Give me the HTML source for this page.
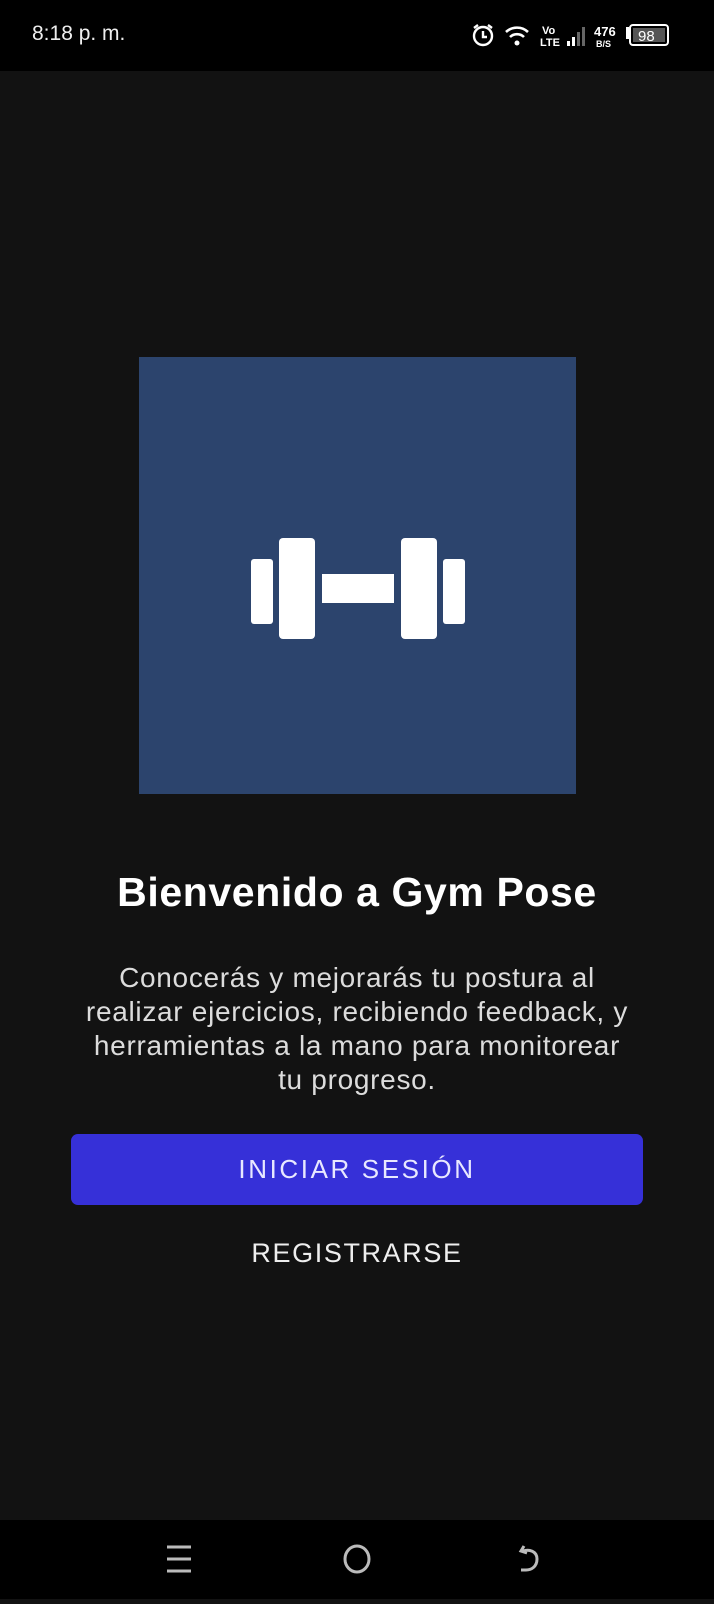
<!DOCTYPE html>
<html><head><meta charset="utf-8"><style>
*{margin:0;padding:0;box-sizing:border-box}
html,body{width:714px;height:1599px;background:#121212;overflow:hidden;font-family:"Liberation Sans",sans-serif;color:#fff}
.sb{position:absolute;left:0;top:0;width:714px;height:71px;background:#000}
.time{position:absolute;left:32px;top:22px;font-size:21px;color:#eee}
.nav{position:absolute;left:0;top:1520px;width:714px;height:79px;background:#000}
.sq{position:absolute;left:139px;top:357px;width:437px;height:437px;background:#2c446d}
.c{position:absolute;left:0;width:714px;text-align:center;white-space:nowrap}
.title{top:869px;font-size:41px;font-weight:bold;letter-spacing:0.6px}
.p{font-size:28px;color:#dcdcdc;letter-spacing:0.7px}
.btn{position:absolute;left:71px;top:1134px;width:572px;height:71px;background:#3630d8;border-radius:7px;text-align:center;line-height:71px;font-size:26px;letter-spacing:2.6px;color:#e8e8ff}
.reg{top:1238px;font-size:27px;letter-spacing:1.6px;color:#eee}
</style></head><body>
<div class="sb">
<div class="time">8:18 p. m.</div>
<svg style="position:absolute;left:470px;top:22px" width="215" height="28" viewBox="0 0 215 28">
<g fill="none" stroke="#fff" stroke-width="2.4"><circle cx="13" cy="14" r="9"/><path d="M13 9v6h4M4 6l4-3M22 6l-4-3"/></g>
<g fill="none" stroke="#fff" stroke-width="2.6"><path d="M36 10a16 16 0 0 1 22 0"/><path d="M40 15a10 10 0 0 1 14 0"/></g>
<circle cx="47" cy="21" r="2.5" fill="#fff"/>
<text x="72" y="12" font-size="11" font-weight="bold" fill="#fff" font-family="Liberation Sans">Vo</text>
<text x="70" y="24" font-size="11" font-weight="bold" fill="#fff" font-family="Liberation Sans">LTE</text>
<rect x="97" y="19" width="3" height="5" fill="#fff"/><rect x="102" y="15" width="3" height="9" fill="#fff"/><rect x="107" y="10" width="3" height="14" fill="#666"/><rect x="112" y="5" width="3" height="19" fill="#666"/>
<text x="124" y="14" font-size="13" font-weight="bold" fill="#fff" font-family="Liberation Sans">476</text>
<text x="126" y="25" font-size="9" font-weight="bold" fill="#fff" font-family="Liberation Sans">B/S</text>
<rect x="156" y="5" width="3" height="12" fill="#fff"/>
<rect x="160" y="3" width="38" height="20" rx="3" fill="none" stroke="#fff" stroke-width="2"/>
<rect x="163" y="6" width="32" height="14" fill="#555"/>
<text x="168" y="19" font-size="15" fill="#fff" font-family="Liberation Sans">98</text>
</svg>
</div>
<div class="sq">
<svg width="437" height="437" viewBox="138 356 437 437">
<g fill="#fff">
<rect x="250" y="558" width="22" height="65" rx="3"/>
<rect x="278" y="537" width="36" height="101" rx="4"/>
<rect x="321" y="573" width="72" height="29"/>
<rect x="400" y="537" width="36" height="101" rx="4"/>
<rect x="442" y="558" width="22" height="65" rx="3"/>
</g></svg>
</div>
<div class="c title">Bienvenido a Gym Pose</div>
<div class="c p" style="top:962px">Conocerás y mejorarás tu postura al</div>
<div class="c p" style="top:996px">realizar ejercicios, recibiendo feedback, y</div>
<div class="c p" style="top:1030px">herramientas a la mano para monitorear</div>
<div class="c p" style="top:1064px">tu progreso.</div>
<div class="btn">INICIAR SESIÓN</div>
<div class="c reg">REGISTRARSE</div>
<div class="nav">
<svg width="714" height="79" viewBox="0 1520 714 79">
<g stroke="#bbb" stroke-width="3" fill="none">
<path d="M167 1547h24M167 1559h24M167 1571h24"/>
<ellipse cx="357" cy="1559" rx="12" ry="13"/>
<path d="M524 1546l-3 5 6 2M523 1551c6-2 14 0 14 8s-6 11-11 11h-5"/>
</g></svg>
</div>
</body></html>
